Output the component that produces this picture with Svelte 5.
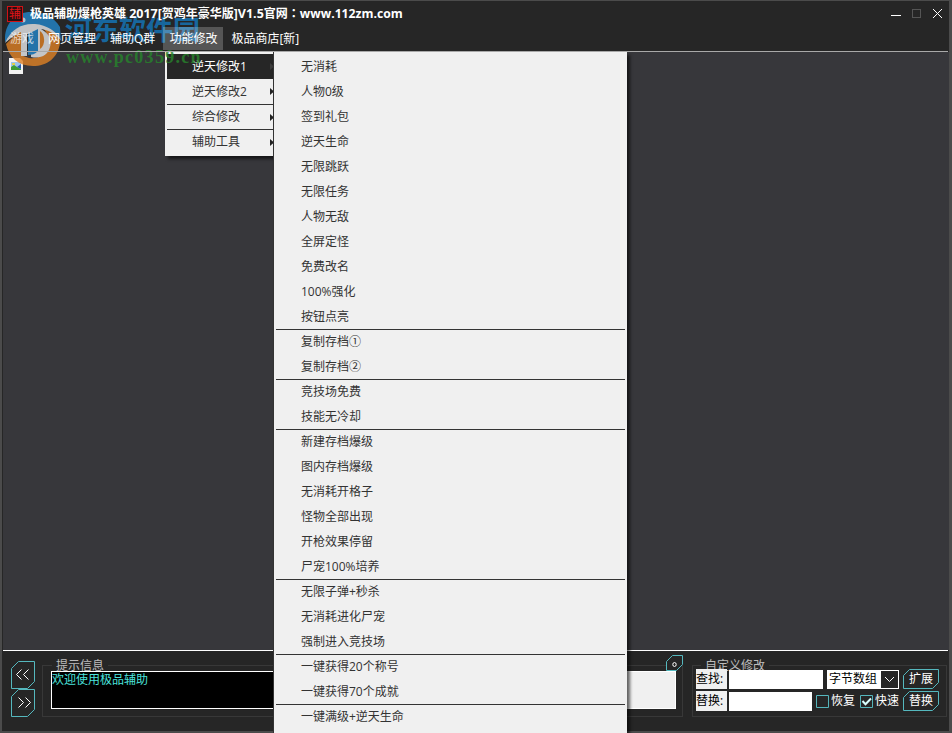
<script lang="ts">
    const menus = ['游戏', '网页管理', '辅助Q群', '功能修改', '极品商店[新]'];
    const activeMenu = '功能修改';

    const submenu = ['逆天修改1', '逆天修改2', '综合修改', '辅助工具'];

    // each group is followed by a separator
    const groups = [
        ['无消耗', '人物0级', '签到礼包', '逆天生命', '无限跳跃', '无限任务', '人物无敌', '全屏定怪', '免费改名', '100%强化', '按钮点亮'],
        ['复制存档①', '复制存档②'],
        ['竞技场免费', '技能无冷却'],
        ['新建存档爆级', '图内存档爆级', '无消耗开格子', '怪物全部出现', '开枪效果停留', '尸宠100%培养'],
        ['无限子弹+秒杀', '无消耗进化尸宠', '强制进入竞技场'],
        ['一键获得20个称号', '一键获得70个成就'],
        ['一键满级+逆天生命']
    ];

    let restore = $state(false);
    let fast = $state(true);
</script>

<div class="window">
    <header class="titlebar">
        <svg class="app-icon" width="16" height="16" viewBox="0 0 16 16">
            <rect x=".5" y=".5" width="15" height="15" fill="#260f10" stroke="#d01216" />
            <text x="8" y="12.3" text-anchor="middle" font-size="12" fill="#e01418">辅</text>
        </svg>
        <h1>极品辅助爆枪英雄 <span class="year">2017[</span>贺鸡年豪华版]<span class="ver">V1.5</span>官网<span class="colon">：</span><span class="site">www.112zm.com</span></h1>
        <svg class="controls" width="54" height="14" viewBox="0 0 54 14" fill="none" shape-rendering="crispEdges">
            <path d="M1 8.5h10" stroke="#fff" />
            <path d="M22.5 2.5h8v8h-8z" stroke="#555" />
            <path d="M43 2l9 9M52 2l-9 9" stroke="#fff" shape-rendering="auto" />
        </svg>
    </header>

    <nav class="menubar">
        {#each menus as menu}
            <span class="menu" class:active={menu === activeMenu}>{menu}</span>
        {/each}
    </nav>

    <main class="client">
        <svg class="broken" width="14" height="16" viewBox="0 0 14 16">
            <path d="M0 0h11l3 3v13H0z" fill="#f2f2f2" />
            <path d="M2 4h10v8H2z" fill="#9cc4ee" />
            <path d="M2 9l3-2 3 2 4 2v1H2z" fill="#3d9c35" />
            <path d="M8 9l4-3v5z" fill="#275dab" />
            <path d="M3 5h3v2H3z" fill="#e3d04a" />
        </svg>
    </main>

    <footer class="bottom">
        <div class="pager">
            {#each ['M10 9l-5 5 5 5M17 9l-5 5 5 5', 'M7 9l5 5-5 5M14 9l5 5-5 5'] as arrow}
                <svg width="24" height="28" viewBox="0 0 24 28" fill="none">
                    <path d="M7.5 .5h16v20l-7 7H.5v-20z" stroke="#55b8be" />
                    <path d={arrow} stroke="#fff" transform="translate(.5 -.5)" />
                </svg>
            {/each}
        </div>

        <section class="group info">
            <h2>提示信息</h2>
            <div class="log">欢迎使用极品辅助<div class="pane"></div></div>
            <svg class="corner" width="17" height="17" viewBox="0 0 17 17" fill="none">
                <path d="M6.5 .5h10v9l-6 6H.5v-9z" fill="#262626" stroke="#55b8be" />
                <ellipse cx="8.5" cy="9.5" rx="1.7" ry="2" stroke="#fff" />
            </svg>
        </section>

        <section class="group custom">
            <h2>自定义修改</h2>
            <div class="row">
                <span class="label">查找:</span>
                <span class="input find"></span>
                <span class="select">
                    字节数组
                    <svg width="17" height="17" viewBox="0 0 17 17" fill="none">
                        <path d="M0 0h17v17H0z" fill="#262626" />
                        <path d="M4 6l4.5 4.5L13 6" stroke="#fff" />
                    </svg>
                </span>
                {@render button('扩展')}
            </div>
            <div class="row">
                <span class="label">替换:</span>
                <span class="input replace"></span>
                <label class="check first">
                    <input type="checkbox" bind:checked={restore} />
                    {@render box(restore)}恢复
                </label>
                <label class="check">
                    <input type="checkbox" bind:checked={fast} />
                    {@render box(fast)}快速
                </label>
                {@render button('替换')}
            </div>
        </section>
    </footer>

    <div class="popup sub">
        {#each submenu as item, i}
            <div class="item" class:selected={i === 0}>
                {item}
                <svg width="4" height="7" viewBox="0 0 4 7"><path d="M0 0l4 3.5L0 7z" fill={i ? '#222' : '#3c3c3c'} /></svg>
            </div>
        {/each}
    </div>

    <div class="popup list">
        {#each groups as group}
            <div class="items">
                {#each group as item}
                    <div class="item">{item}</div>
                {/each}
            </div>
        {/each}
    </div>

    <div class="watermark">
        <svg width="57" height="56" viewBox="0 0 57 56">
            <path d="M0 31C-1 14 9 1 26 1c13 0 23 5 29 15l1 14C44 12 22 9 0 31z" fill="#2387cc" />
            <path d="M1 33c7-7 11-11 17-14v26l6 2c14 2 20-10 19-20-1-6-4-9-8-12 14 3 21 10 20 17C53 47 42 55 28 55 13 55 4 46 1 33z" fill="#df8124" />
            <path d="M0 32c6-14 17-20 30-19 12 1 21 7 26 16-7-7-13-10-20-11 9 5 11 12 9 18-2 8-9 12-19 10V23h-4v22h-6V21C9 24 5 28 0 32z" fill="#e8eaec" />
            <path d="M23 23l10-5v22c-3 3-6 4-10 4z" fill="#2387cc" />
            <path d="M35 20c5 3 6 14 0 18z" fill="#df8124" />
            <circle cx="18" cy="9" r="2.5" fill="#d8e8f4" />
        </svg>
        <div class="mark">
            <b>河东软件园</b>
            <i>www.pc0359.cn</i>
        </div>
    </div>
</div>

{#snippet button(text: string)}
    <span class="btn">
        <svg width="36" height="20" viewBox="0 0 36 20" fill="none">
            <path d="M6.5 .5h29v13l-6 6H.5v-13z" stroke="#55b8be" />
        </svg>
        {text}
    </span>
{/snippet}

{#snippet box(checked: boolean)}
    <svg width="13" height="13" viewBox="0 0 13 13" fill="none">
        <path d="M.5 .5h12v12H.5z" stroke="#55b8be" />
        {#if checked}
            <path d="M2.5 6l3 3.2L11 3.5" stroke="#d8ffff" stroke-width="2" />
        {/if}
    </svg>
{/snippet}

<style>
    :global(body) {
        margin: 0;
        background: #262626;
        overflow: hidden;
    }

    .window {
        position: relative;
        box-sizing: border-box;
        width: 952px;
        height: 733px;
        display: flex;
        flex-direction: column;
        border: solid #4b4b4b;
        border-width: 1px 3px 2px 2px;
        background: #262626;
        color: #fff;
        font: 12px/16px 'Open Sans', 'Noto Sans CJK SC', sans-serif;
        white-space: nowrap;
    }

    /* header text stays readable above the watermark */
    .titlebar,
    .menubar {
        z-index: 1;
    }

    .titlebar {
        position: relative;
        height: 26px;
        display: flex;
        align-items: center;
        padding-left: 5px;
    }

    h1 {
        flex: 1;
        height: 16px;
        margin: 0 0 0 7px;
        font-size: 12px;
        line-height: 15px;
    }

    .year,
    .ver {
        font-size: 12.5px;
    }

    .colon {
        font-family: 'Noto Sans CJK TC', sans-serif;
        line-height: 1;
    }

    .site {
        font-size: 12.2px;
    }

    .controls {
        margin-right: 5px;
    }

    .menubar {
        position: relative;
        height: 24px;
        flex: none;
        display: flex;
        align-items: flex-start;
        gap: 2px;
        border-bottom: 1px solid #a9a9a9;
        margin: 0 1px;
        padding-left: 1px;
    }

    .menu {
        height: 23px;
        line-height: 23px;
        padding: 0 6px;
    }

    .menu:first-child {
        color: rgba(255, 255, 255, 0.7);
    }

    .menu.active {
        background: rgba(255, 255, 255, 0.22);
    }

    .client {
        flex: 1;
        margin-left: 1px;
        background: #37373b;
    }

    .broken {
        display: block;
        margin: 6px 0 0 6px;
    }

    .bottom {
        box-sizing: border-box;
        height: 81px;
        flex: none;
        display: flex;
        align-items: flex-start;
        margin: 0 1px;
        border-top: 1px solid #fff;
    }

    .pager {
        width: 24px;
        margin: 10px 7px 0 8px;
        display: grid;
    }

    .pager svg {
        display: block;
    }

    .group {
        position: relative;
        box-sizing: border-box;
        height: 52px;
        margin-top: 14px;
        border: 1px solid #383838;
    }

    h2 {
        position: absolute;
        left: 8px;
        top: -8px;
        margin: 0;
        padding: 0 4px;
        background: #262626;
        color: #bdbdbd;
        font-weight: normal;
        font-size: 12px;
        line-height: 16px;
    }

    .info {
        width: 641px;
        padding: 5px 6px 7px 8px;
    }

    .info h2 {
        left: 9px;
    }

    .log {
        position: relative;
        box-sizing: border-box;
        height: 38px;
        display: flex;
        justify-content: space-between;
        border: 1px solid #fff;
        background: #000;
        color: #4be3dd;
        line-height: 15px;
    }

    .pane {
        width: 60px;
        background: #f0f0f0;
    }

    .corner {
        position: absolute;
        right: -1px;
        top: -11px;
    }

    .custom {
        width: 255px;
        margin-left: 9px;
        padding: 3px 0 0 3px;
    }

    .row {
        position: relative;
        height: 20px;
        margin-bottom: 2px;
        display: flex;
        align-items: center;
    }

    .label {
        width: 31px;
        height: 20px;
        line-height: 20px;
        background: #f0f0f0;
        color: #000;
        margin-right: 2px;
    }

    .input {
        height: 19px;
        background: #fff;
    }

    .find {
        width: 94px;
    }

    .replace {
        width: 83px;
    }

    .select {
        box-sizing: border-box;
        width: 72px;
        height: 19px;
        margin-left: 4px;
        padding: 1px 1px 1px 2px;
        display: flex;
        align-items: center;
        justify-content: space-between;
        background: #fff;
        color: #000;
    }

    .btn {
        position: relative;
        width: 36px;
        height: 20px;
        line-height: 20px;
        margin-left: 4px;
        text-align: center;
    }

    .btn svg {
        position: absolute;
        left: 0;
        top: 0;
    }

    .check {
        display: flex;
        align-items: center;
        gap: 2px;
        width: 39px;
        margin-left: 5px;
    }

    .check.first {
        margin-left: 4px;
    }

    .check input {
        display: none;
    }

    .popup {
        position: absolute;
        top: 51px;
        background: #f0f0f0;
        color: #333;
        box-shadow: 3px 3px 3px rgba(0, 0, 0, 0.6);
    }

    .sub {
        left: 163px;
        width: 107px;
        padding: 2px 0 2px 2px;
    }

    .item {
        height: 25px;
        line-height: 25px;
    }

    .sub .item {
        box-sizing: border-box;
        display: flex;
        justify-content: space-between;
        align-items: center;
        padding-left: 25px;
    }

    .sub .item + .item + .item {
        border-top: 1px solid #333;
        line-height: 24px;
    }

    .sub .item.selected {
        background: #262626;
        color: #fff;
    }

    .list {
        left: 271px;
        width: 349px;
        height: 690px;
        padding: 2px 2px 0;
        border-left: 1px solid #333;
    }

    .items + .items {
        border-top: 1px solid #333;
    }

    .items + .items .item:first-child {
        height: 24px;
        line-height: 24px;
    }

    .list .item {
        padding-left: 25px;
    }

    .watermark {
        position: absolute;
        left: 3px;
        top: 10px;
        display: flex;
        opacity: 0.8;
    }

    .mark {
        margin: 1px 0 0 3px;
    }

    .mark b,
    .mark i {
        display: block;
        font-style: normal;
    }

    .mark b {
        color: #1478bd;
        font: bold 27px/34px 'Noto Sans CJK SC', sans-serif;
    }

    .mark i {
        color: #26852c;
        font: bold 18px/20px 'Liberation Serif', serif;
        letter-spacing: 1.3px;
        margin: 1px 0 0 1px;
    }
</style>
